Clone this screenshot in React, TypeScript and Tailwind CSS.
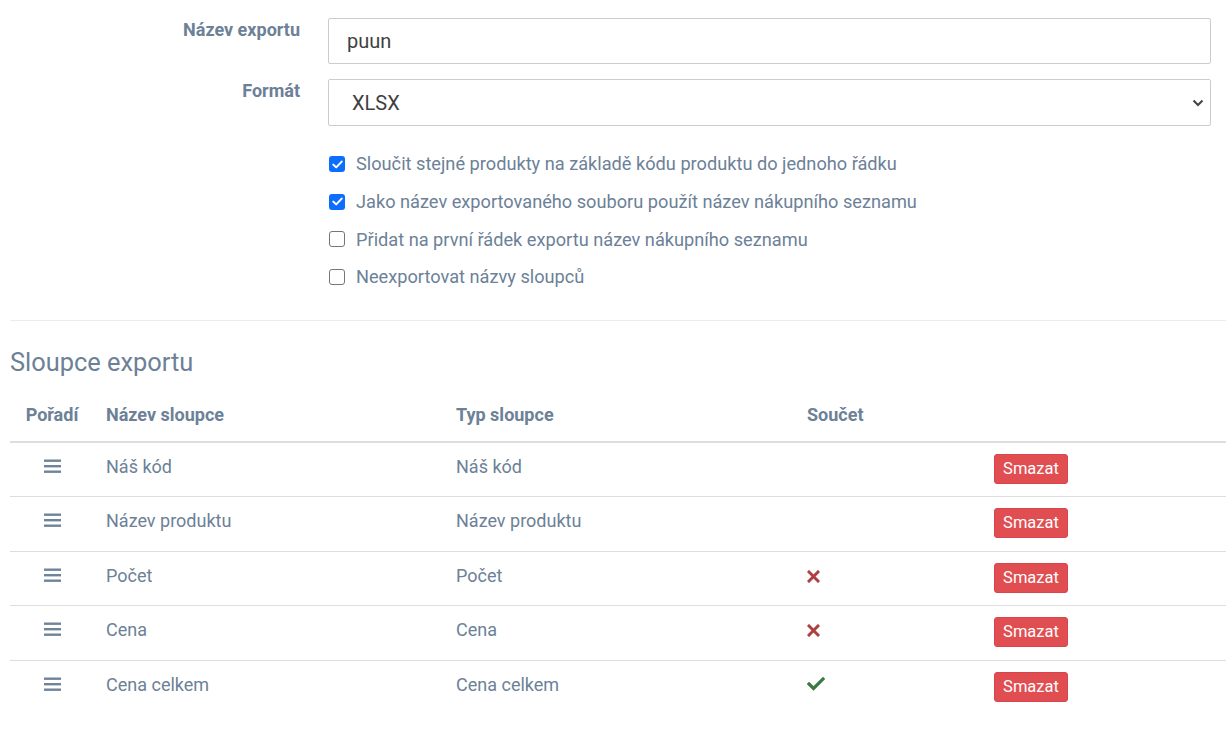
const rows = [
  { name: 'Náš kód', type: 'Náš kód', sum: null },
  { name: 'Název produktu', type: 'Název produktu', sum: null },
  { name: 'Počet', type: 'Počet', sum: false },
  { name: 'Cena', type: 'Cena', sum: false },
  { name: 'Cena celkem', type: 'Cena celkem', sum: true },
];

const options = [
  { label: 'Sloučit stejné produkty na základě kódu produktu do jednoho řádku', checked: true },
  { label: 'Jako název exportovaného souboru použít název nákupního seznamu', checked: true },
  { label: 'Přidat na první řádek exportu název nákupního seznamu', checked: false },
  { label: 'Neexportovat názvy sloupců', checked: false },
];

function Bars() {
  return (
    <svg width="17" height="14" viewBox="0 0 17 14" className="block mx-auto">
      <rect x="0" y="0.5" width="17" height="2.4" fill="#6f8399" />
      <rect x="0" y="6" width="17" height="2.4" fill="#6f8399" />
      <rect x="0" y="11.5" width="17" height="2.4" fill="#6f8399" />
    </svg>
  );
}

function Cross() {
  return (
    <svg width="13" height="13" viewBox="0 0 13 13" className="block">
      <path d="M2 2 L11 11 M11 2 L2 11" stroke="#b0403f" strokeWidth="3" strokeLinecap="square" />
    </svg>
  );
}

function Tick() {
  return (
    <svg width="18" height="14" viewBox="0 0 18 14" className="block -mt-[2px]">
      <path d="M2 7 L6.5 11.5 L16 2" fill="none" stroke="#3b7a45" strokeWidth="3.2" strokeLinecap="square" />
    </svg>
  );
}

function Checkbox({ checked }: { checked: boolean }) {
  if (checked) {
    return (
      <span className="w-4 h-4 rounded-[3px] bg-[#0d6efd] flex items-center justify-center shrink-0">
        <svg width="11" height="9" viewBox="0 0 11 9">
          <path d="M1.3 4.6 L4.2 7.4 L9.7 1.6" fill="none" stroke="white" strokeWidth="2" strokeLinecap="round" strokeLinejoin="round" />
        </svg>
      </span>
    );
  }
  return <span className="w-4 h-4 rounded-[3px] border border-[#767676] bg-white shrink-0" />;
}

export default function App() {
  return (
    <div className="bg-white min-h-[731px] font-['Roboto',sans-serif] text-[#6c8197] px-[10px] pr-px">
      <div className="pt-[18px] pr-[15px]">
        <div className="flex">
          <label className="w-[290px] text-right font-bold text-[18px] leading-[24px]">Název exportu</label>
          <div className="ml-[28px] flex-1">
            <div className="h-[46px] border border-[#ccc] rounded-[2px] flex items-center pl-[18px] text-[20px] text-[#3f3f3f]">
              puun
            </div>
          </div>
        </div>
        <div className="flex mt-[15px]">
          <label className="w-[290px] text-right font-bold text-[18px] leading-[24px]">Formát</label>
          <div className="ml-[28px] flex-1">
            <div className="h-[47px] border border-[#ccc] rounded-[2px] flex items-center justify-between pl-[23px] pr-[6px] text-[20px] text-[#3f3f3f]">
              <span>XLSX</span>
              <svg width="12" height="8" viewBox="0 0 12 8">
                <path d="M1.5 1.5 L6 6 L10.5 1.5" fill="none" stroke="#444" strokeWidth="2" />
              </svg>
            </div>
          </div>
        </div>
        <div className="ml-[319px] mt-[26px] flex flex-col gap-[13.7px]">
          {options.map((o, i) => (
            <div key={i} className="flex items-center gap-[11px] h-[24px] text-[18.2px]">
              <Checkbox checked={o.checked} />
              <span>{o.label}</span>
            </div>
          ))}
        </div>
      </div>

      <div className="border-t border-[#ececec] mt-[31px]" />

      <h2 className="text-[25.4px] leading-[30px] mt-[26px] text-[#6c8197]">Sloupce exportu</h2>

      <table className="w-full mt-[26px] border-collapse text-[18px] table-fixed">
        <colgroup>
          <col className="w-[84px]" />
          <col className="w-[350px]" />
          <col className="w-[351px]" />
          <col className="w-[187px]" />
          <col />
        </colgroup>
        <thead>
          <tr className="border-b-2 border-[#dddddd]">
            <th className="text-center font-bold pb-[14px] pt-0 leading-[24px]">Pořadí</th>
            <th className="text-left font-bold pl-[12px] pb-[14px] leading-[24px]">Název sloupce</th>
            <th className="text-left font-bold pl-[12px] pb-[14px] leading-[24px]">Typ sloupce</th>
            <th className="text-left font-bold pl-[12px] pb-[14px] leading-[24px]">Součet</th>
            <th />
          </tr>
        </thead>
        <tbody>
          {rows.map((r, i) => (
            <tr key={i} className={i < rows.length - 1 ? 'border-b border-[#dddddd] h-[54.5px]' : 'h-[54.5px]'}>
              <td className="align-top pt-[16px]">
                <Bars />
              </td>
              <td className="pl-[12px] align-top pt-[12px] leading-[24px]">{r.name}</td>
              <td className="pl-[12px] align-top pt-[12px] leading-[24px]">{r.type}</td>
              <td className="pl-[12px] align-top pt-[18px]">
                {r.sum === false && <Cross />}
                {r.sum === true && <Tick />}
              </td>
              <td className="pl-[12px] align-top pt-[11px]">
                <button className="bg-[#e04e51] border border-[#d9434a] text-white text-[16.5px] rounded-[3px] w-[74px] h-[30px] leading-none">
                  Smazat
                </button>
              </td>
            </tr>
          ))}
        </tbody>
      </table>
    </div>
  );
}
